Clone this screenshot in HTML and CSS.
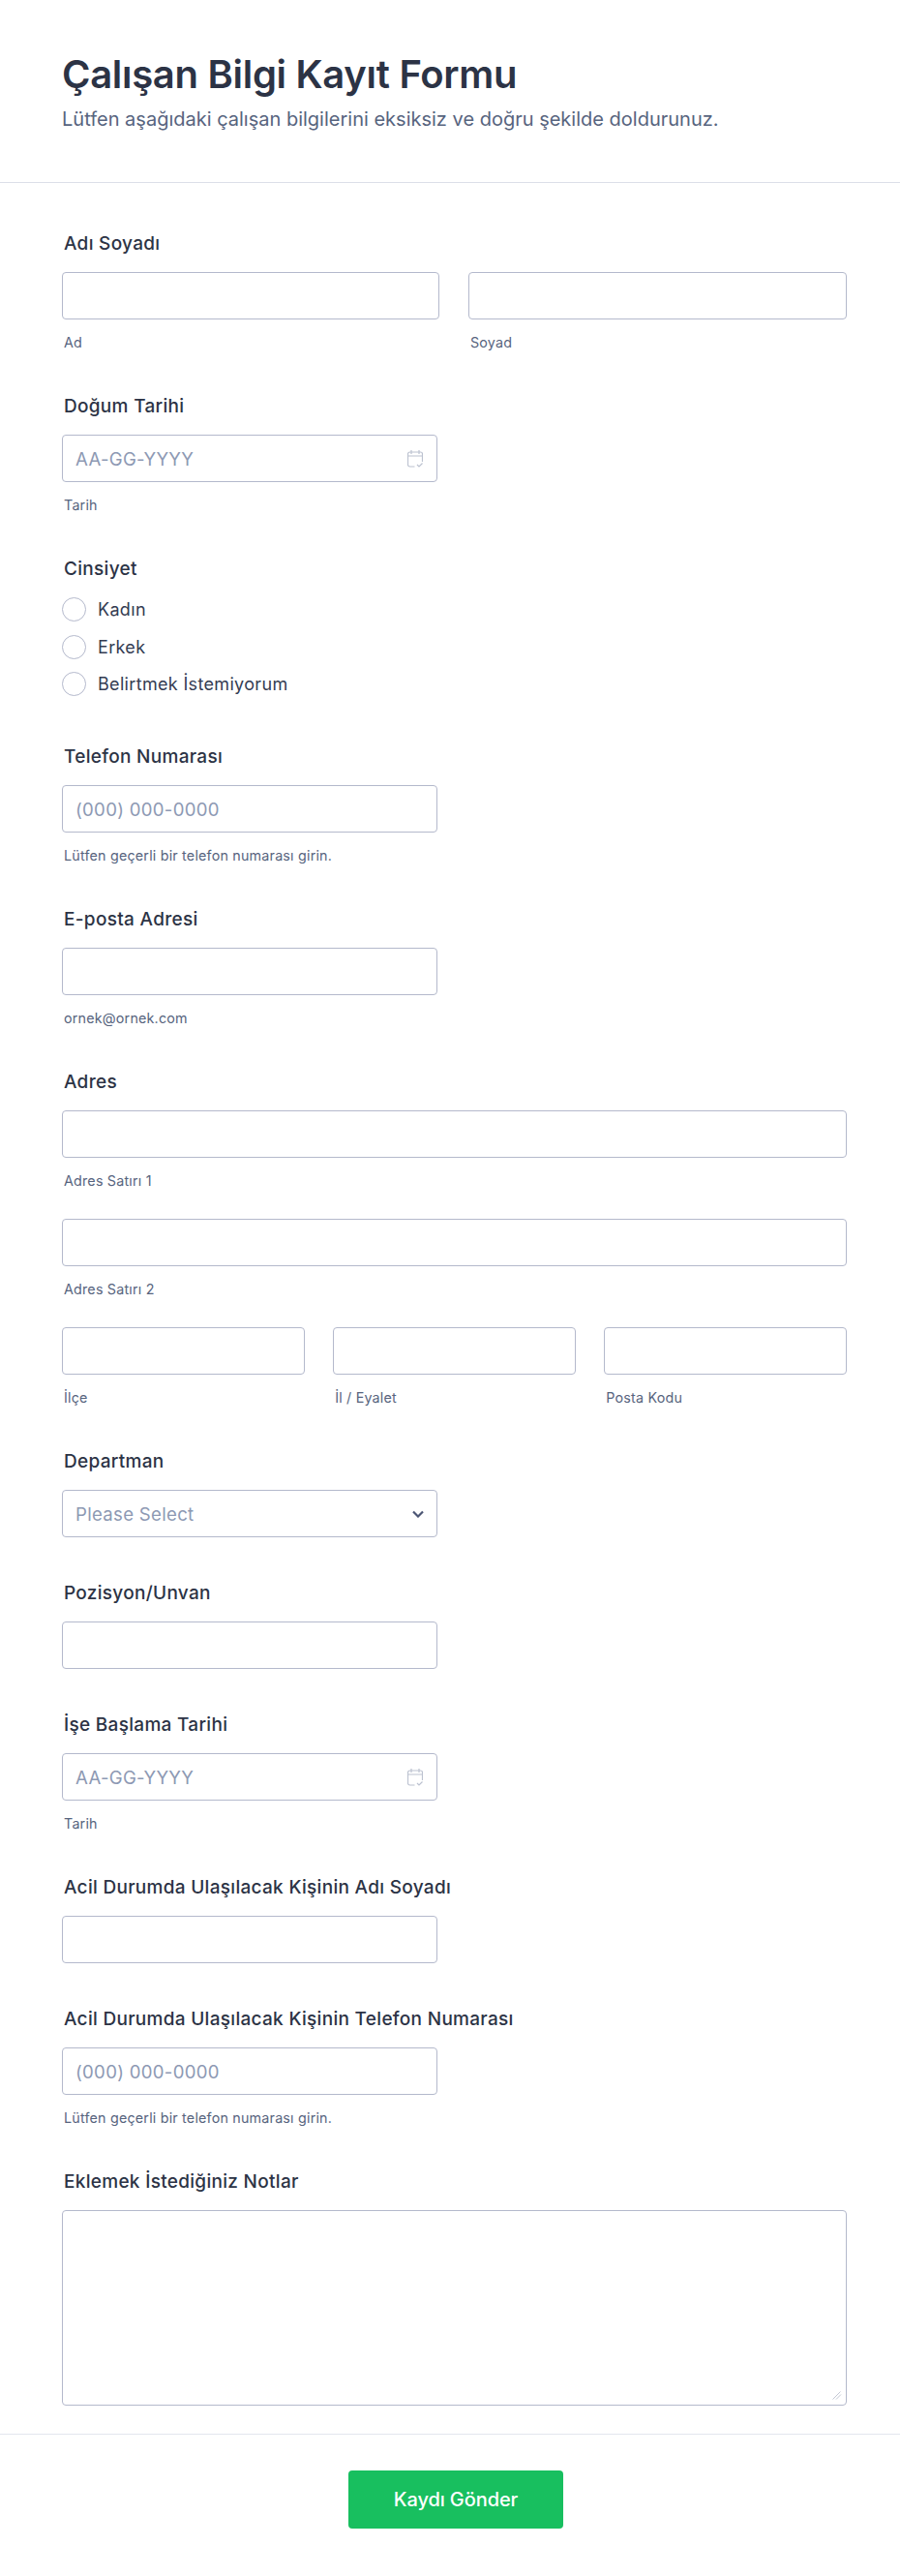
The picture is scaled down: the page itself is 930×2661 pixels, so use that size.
FILE: index.html
```html
<!DOCTYPE html>
<html lang="tr">
<head>
    <meta charset="UTF-8">
    <meta name="viewport" content="width=device-width, initial-scale=1.0">
    <title>Çalışan Bilgi Kayıt Formu</title>
    <link rel="stylesheet" href="styles.css">
</head>
<body>
    <form class="form">
        <header class="form-header">
            <h1>Çalışan Bilgi Kayıt Formu</h1>
            <p>Lütfen aşağıdaki çalışan bilgilerini eksiksiz ve doğru şekilde doldurunuz.</p>
        </header>

        <div class="form-body">
            <div class="field">
                <label class="field-label">Adı Soyadı</label>
                <div class="row row-2">
                    <div>
                        <input type="text">
                        <span class="sublabel">Ad</span>
                    </div>
                    <div>
                        <input type="text">
                        <span class="sublabel">Soyad</span>
                    </div>
                </div>
            </div>

            <div class="field">
                <label class="field-label">Doğum Tarihi</label>
                <div class="half with-icon">
                    <input type="text" placeholder="AA-GG-YYYY">
                    <svg class="icon-calendar" width="16" height="18" viewBox="0 0 16 18" fill="none" stroke="#bcc2d0" stroke-width="1.2">
                        <path d="M7.5 17H2.5a2 2 0 0 1-2-2V4a2 2 0 0 1 2-2h11a2 2 0 0 1 2 2v8"/>
                        <path d="M.5 6h15M4 0v4M12 0v4"/>
                        <path d="M10 15l2 2 3.5-3.5"/>
                    </svg>
                </div>
                <span class="sublabel">Tarih</span>
            </div>

            <div class="field field-radios">
                <label class="field-label">Cinsiyet</label>
                <div class="radios">
                    <label class="radio"><input type="radio" name="gender"> Kadın</label>
                    <label class="radio"><input type="radio" name="gender"> Erkek</label>
                    <label class="radio"><input type="radio" name="gender"> Belirtmek İstemiyorum</label>
                </div>
            </div>

            <div class="field">
                <label class="field-label">Telefon Numarası</label>
                <div class="half"><input type="text" placeholder="(000) 000-0000"></div>
                <span class="sublabel">Lütfen geçerli bir telefon numarası girin.</span>
            </div>

            <div class="field">
                <label class="field-label">E-posta Adresi</label>
                <div class="half"><input type="text"></div>
                <span class="sublabel">ornek@ornek.com</span>
            </div>

            <div class="field">
                <label class="field-label">Adres</label>
                <div class="address-line">
                    <input type="text">
                    <span class="sublabel">Adres Satırı 1</span>
                </div>
                <div class="address-line">
                    <input type="text">
                    <span class="sublabel">Adres Satırı 2</span>
                </div>
                <div class="row row-3">
                    <div>
                        <input type="text">
                        <span class="sublabel">İlçe</span>
                    </div>
                    <div>
                        <input type="text">
                        <span class="sublabel">İl / Eyalet</span>
                    </div>
                    <div>
                        <input type="text">
                        <span class="sublabel">Posta Kodu</span>
                    </div>
                </div>
            </div>

            <div class="field field-plain">
                <label class="field-label">Departman</label>
                <div class="half with-icon">
                    <select>
                        <option>Please Select</option>
                    </select>
                    <svg class="icon-chevron" width="12" height="8" viewBox="0 0 12 8" fill="none" stroke="#4c5674" stroke-width="2.2">
                        <path d="M1 1.5l5 5 5-5"/>
                    </svg>
                </div>
            </div>

            <div class="field field-plain">
                <label class="field-label">Pozisyon/Unvan</label>
                <div class="half"><input type="text"></div>
            </div>

            <div class="field">
                <label class="field-label">İşe Başlama Tarihi</label>
                <div class="half with-icon">
                    <input type="text" placeholder="AA-GG-YYYY">
                    <svg class="icon-calendar" width="16" height="18" viewBox="0 0 16 18" fill="none" stroke="#bcc2d0" stroke-width="1.2">
                        <path d="M7.5 17H2.5a2 2 0 0 1-2-2V4a2 2 0 0 1 2-2h11a2 2 0 0 1 2 2v8"/>
                        <path d="M.5 6h15M4 0v4M12 0v4"/>
                        <path d="M10 15l2 2 3.5-3.5"/>
                    </svg>
                </div>
                <span class="sublabel">Tarih</span>
            </div>

            <div class="field field-plain">
                <label class="field-label">Acil Durumda Ulaşılacak Kişinin Adı Soyadı</label>
                <div class="half"><input type="text"></div>
            </div>

            <div class="field">
                <label class="field-label">Acil Durumda Ulaşılacak Kişinin Telefon Numarası</label>
                <div class="half"><input type="text" placeholder="(000) 000-0000"></div>
                <span class="sublabel">Lütfen geçerli bir telefon numarası girin.</span>
            </div>

            <div class="field field-notes">
                <label class="field-label">Eklemek İstediğiniz Notlar</label>
                <div class="with-icon">
                    <textarea></textarea>
                    <svg class="icon-grip" width="10" height="9" viewBox="0 0 10 9" fill="none" stroke="#c3c8d4" stroke-width="1">
                        <path d="M.5 8.5l8-8M4 8.5l5-5"/>
                    </svg>
                </div>
            </div>
        </div>

        <footer class="form-footer">
            <button type="button">Kaydı Gönder</button>
        </footer>
    </form>
</body>
</html>
```

FILE: styles.css
```css
* {
    box-sizing: border-box;
}

body {
    font-family: 'Inter', sans-serif;
    margin: 0;
    background-color: #ffffff;
    color: #2c3345;
}

.form-header {
    height: 189px;
    padding: 51px 64px 0;
    border-bottom: 1px solid #dcdfe8;
}

.form-header h1 {
    font-size: 40px;
    font-weight: 600;
    line-height: 52px;
    letter-spacing: -0.3px;
    margin: 0;
}

.form-header p {
    font-size: 20px;
    line-height: 30px;
    margin: 5px 0 0;
    color: #57647e;
}

.form-body {
    padding: 50px 55px 0 64px;
}

.field {
    margin-bottom: 44px;
}

.field-plain {
    margin-bottom: 45px;
}

.field-label {
    display: block;
    font-size: 19px;
    font-weight: 500;
    line-height: 26px;
    letter-spacing: 0.3px;
    margin: 0 0 16px 2px;
    color: #2c3345;
}

input[type="text"],
select,
textarea {
    display: block;
    width: 100%;
    height: 49px;
    padding: 0 13px;
    border: 1px solid #b4b9cc;
    border-radius: 4px;
    background-color: #ffffff;
    font-family: 'Inter', sans-serif;
    font-size: 18.6px;
    letter-spacing: 0.3px;
    color: #8d99b3;
}

input::placeholder {
    color: #8d99b3;
    opacity: 1;
}

select {
    appearance: none;
}

textarea {
    height: 202px;
    resize: none;
}

.half {
    width: 388px;
}

.with-icon {
    position: relative;
}

.icon-calendar {
    position: absolute;
    top: 16px;
    right: 15px;
}

.icon-chevron {
    position: absolute;
    top: 21px;
    right: 14px;
}

.icon-grip {
    position: absolute;
    right: 5px;
    bottom: 6px;
}

.sublabel {
    display: block;
    font-size: 14.3px;
    line-height: 18px;
    letter-spacing: 0.2px;
    margin: 15px 0 0 2px;
    color: #57647e;
}

.row {
    display: grid;
}

.row-2 {
    grid-template-columns: 390px 391px;
    column-gap: 30px;
}

.row-3 {
    grid-template-columns: repeat(3, 1fr);
    column-gap: 29.5px;
}

.address-line {
    margin-bottom: 30px;
}

.field-radios {
    padding-bottom: 6px;
}

.radios {
    display: flex;
    flex-direction: column;
    gap: 13.5px;
    margin-top: 1px;
}

.radio {
    display: flex;
    align-items: center;
    height: 25px;
    font-size: 18px;
    letter-spacing: 0.33px;
    color: #343c52;
}

.radio input {
    appearance: none;
    width: 25px;
    height: 25px;
    margin: 0 12px 0 0;
    border: 1px solid #b4b9cc;
    border-radius: 50%;
    background-color: #ffffff;
}

.field-notes {
    margin-bottom: 29px;
}

.form-footer {
    display: flex;
    justify-content: center;
    padding: 37px 0 0 12px;
    border-top: 1px solid #e3e6ee;
}

.form-footer button {
    width: 222px;
    height: 60px;
    border: none;
    border-radius: 4px;
    background-color: #18bf5f;
    color: #ffffff;
    font-family: 'Inter', sans-serif;
    font-size: 20px;
    font-weight: 500;
    letter-spacing: -0.1px;
    cursor: pointer;
}
```
